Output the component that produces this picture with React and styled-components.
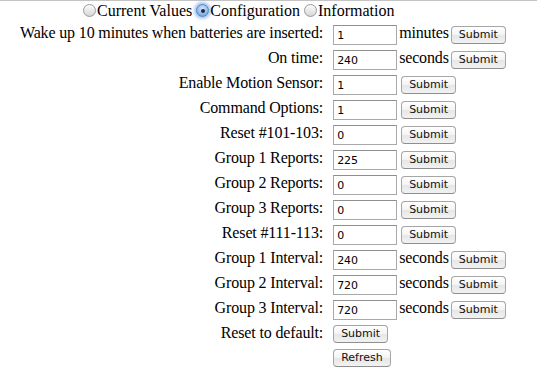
import React, { useState } from "react";
import styled, { createGlobalStyle } from "styled-components";

const GlobalStyle = createGlobalStyle`
  html, body {
    margin: 0;
    padding: 0;
    background: #ffffff;
  }
  body {
    font-family: "Liberation Serif", "Times New Roman", serif;
    font-size: 16px;
    color: #000;
  }
`;

const Page = styled.div`
  border-top: 1px solid #c4c4c4;
  width: 537px;
  height: 384px;
  box-sizing: border-box;
`;

const RadioBar = styled.div`
  display: flex;
  align-items: center;
  height: 19px;
  padding-left: 83px;
  line-height: 18px;
`;

const RadioLabel = styled.label`
  display: inline-flex;
  align-items: center;
  margin-right: 4px;
  cursor: pointer;
`;

const RadioDot = styled.span`
  width: 13px;
  height: 13px;
  border-radius: 50%;
  margin-right: 1px;
  box-sizing: border-box;
  display: inline-flex;
  align-items: center;
  justify-content: center;
  border: 1px solid ${(p) => (p.$on ? "#4a7fc4" : "#9a9a9a")};
  background: ${(p) =>
    p.$on
      ? "radial-gradient(circle at 50% 35%, #d6e7fb 0%, #8db8ea 60%, #5f93d6 100%)"
      : "linear-gradient(#fdfdfd, #d6d6d6)"};
  box-shadow: ${(p) => (p.$on ? "0 0 3px 2px rgba(90,150,230,0.55)" : "none")};
  &::after {
    content: "";
    width: 4px;
    height: 4px;
    border-radius: 50%;
    background: ${(p) => (p.$on ? "#1c2a40" : "transparent")};
  }
`;

const FormTable = styled.table`
  border-collapse: separate;
  border-spacing: 0;
  margin-left: 18px;
  margin-top: 2px;
`;

const Row = styled.tr`
  height: ${(p) => p.$h || 25}px;
`;

const LabelCell = styled.td`
  text-align: right;
  padding: 0 9px 3px 2px;
  white-space: nowrap;
  vertical-align: middle;
  line-height: 18px;
  letter-spacing: -0.15px;
`;

const FieldCell = styled.td`
  vertical-align: middle;
  padding: 0 0 0 1px;
  width: 64px;
  line-height: 0;
`;

const ActionCell = styled.td`
  vertical-align: middle;
  white-space: nowrap;
  padding: 0;
`;

const Input = styled.input`
  width: 64px;
  height: 20px;
  box-sizing: border-box;
  border: 1px solid #a9a9a9;
  border-top-color: #8f8f8f;
  padding: 2px 3px 0;
  font-family: "DejaVu Sans", "Lucida Grande", sans-serif;
  font-size: 11px;
  color: #000;
  display: block;
  outline: none;
`;

const Unit = styled.span`
  margin-left: 2px;
  vertical-align: middle;
  position: relative;
  top: -2px;
  letter-spacing: -0.15px;
`;

const Button = styled.button`
  font-family: "DejaVu Sans", "Lucida Grande", sans-serif;
  font-size: 11px;
  height: 18px;
  padding: 0 7px;
  margin-left: ${(p) => p.$gap || 0}px;
  border: 1px solid #a6a6a6;
  border-bottom-color: #8e8e8e;
  border-radius: 4px;
  background: linear-gradient(#ffffff 0%, #f3f3f3 50%, #e6e6e6 51%, #f2f2f2 100%);
  color: #111;
  vertical-align: middle;
  line-height: 14px;
  cursor: pointer;
`;

const fields = [
  { label: "Wake up 10 minutes when batteries are inserted:", value: "1", unit: "minutes" },
  { label: "On time:", value: "240", unit: "seconds" },
  { label: "Enable Motion Sensor:", value: "1" },
  { label: "Command Options:", value: "1" },
  { label: "Reset #101-103:", value: "0" },
  { label: "Group 1 Reports:", value: "225" },
  { label: "Group 2 Reports:", value: "0" },
  { label: "Group 3 Reports:", value: "0" },
  { label: "Reset #111-113:", value: "0" },
  { label: "Group 1 Interval:", value: "240", unit: "seconds" },
  { label: "Group 2 Interval:", value: "720", unit: "seconds" },
  { label: "Group 3 Interval:", value: "720", unit: "seconds" },
];

const tabs = ["Current Values", "Configuration", "Information"];

const App = () => {
  const [tab, setTab] = useState("Configuration");
  const [values, setValues] = useState(fields.map((f) => f.value));

  return (
    <Page>
      <GlobalStyle />
      <RadioBar>
        {tabs.map((t) => (
          <RadioLabel key={t} onClick={() => setTab(t)}>
            <RadioDot $on={tab === t} />
            {t}
          </RadioLabel>
        ))}
      </RadioBar>
      <FormTable>
        <tbody>
          {fields.map((f, i) => (
            <Row key={f.label}>
              <LabelCell>{f.label}</LabelCell>
              <FieldCell>
                <Input
                  value={values[i]}
                  onChange={(e) => {
                    const next = [...values];
                    next[i] = e.target.value;
                    setValues(next);
                  }}
                />
              </FieldCell>
              <ActionCell>
                {f.unit && <Unit>{f.unit}</Unit>}
                <Button $gap={f.unit ? 2 : 4}>Submit</Button>
              </ActionCell>
            </Row>
          ))}
          <Row $h={24}>
            <LabelCell>Reset to default:</LabelCell>
            <FieldCell>
              <Button>Submit</Button>
            </FieldCell>
            <ActionCell />
          </Row>
          <Row $h={23}>
            <LabelCell />
            <FieldCell>
              <Button>Refresh</Button>
            </FieldCell>
            <ActionCell />
          </Row>
        </tbody>
      </FormTable>
    </Page>
  );
};

export default App;
